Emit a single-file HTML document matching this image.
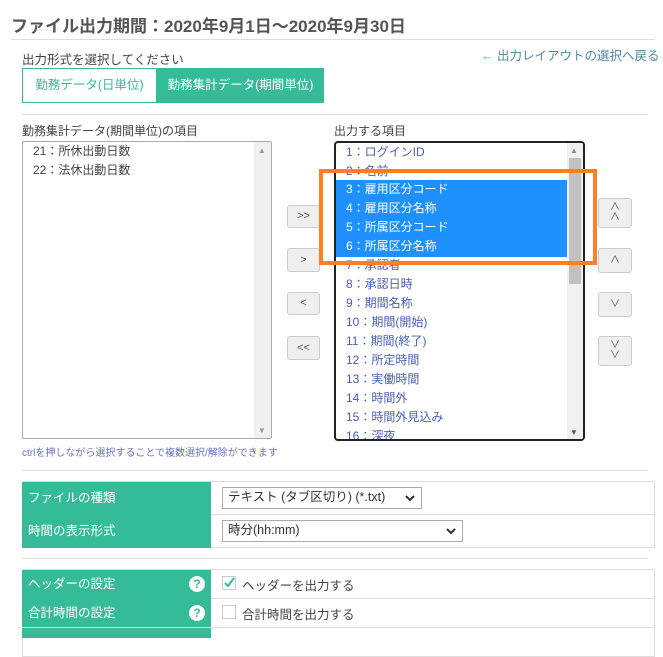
<!DOCTYPE html>
<html><head><meta charset="utf-8"><style>
*{margin:0;padding:0;box-sizing:border-box}
body{width:663px;height:633px;overflow:hidden;background:#fff;position:relative;font-family:"Liberation Sans","Noto Sans CJK JP",sans-serif;color:#444;font-size:12px}
.a{position:absolute;white-space:nowrap}
.hr{position:absolute;height:1px;background:#ddd}
.btn{position:absolute;background:#efefef;border:1px solid #ccc;border-radius:3px;font-size:11px;color:#555;text-align:center;line-height:1}
.it{position:absolute;left:10px;font-size:12px;color:#4a5fb5;height:19px;line-height:19px}
.sel{background:#1e90ff;color:#fff;left:0;width:231px;padding-left:10px}
.lab{position:absolute;left:22px;width:189px;background:#36bb99;color:#fff;font-size:12.5px;padding-left:6px}
.row{position:absolute;left:22px;width:633px;border:1px solid #ddd;background:#fff}
.q{position:absolute;left:189px;width:16px;height:16px;border-radius:50%;background:#fff;color:#36bb99;font-weight:bold;font-size:12px;text-align:center;line-height:16px}
.sl{position:absolute;border:1px solid #aaa;background:#fff;font-size:12.5px;padding-left:5px;line-height:19px;color:#333}
.sl svg{position:absolute;right:6px;top:7px}
</style></head><body>
<div class="a" style="left:11px;top:12px;font-size:17px;font-weight:bold;color:#555">ファイル出力期間：2020年9月1日～2020年9月30日</div>
<div class="hr" style="left:11px;top:39px;width:644px"></div>
<div class="a" style="left:22px;top:49px;font-size:12.5px">出力形式を選択してください</div>
<div class="a" style="left:481px;top:45px;font-size:12.5px;color:#4a8aa0"><span style="color:#36bb99;font-weight:bold">←</span> 出力レイアウトの選択へ戻る</div>
<div class="a" style="left:22px;top:68px;width:135px;height:35px;border:1px solid #36bb99;color:#36bb99;font-size:12.5px;line-height:33px;text-align:center">勤務データ(日単位)</div>
<div class="a" style="left:157px;top:68px;width:167px;height:35px;background:#36bb99;color:#fff;font-size:12.5px;line-height:35px;text-align:center">勤務集計データ(期間単位)</div>
<div class="hr" style="left:22px;top:114px;width:626px"></div>
<div class="a" style="left:22px;top:122px;font-size:12px">勤務集計データ(期間単位)の項目</div>
<div class="a" style="left:334px;top:122px;font-size:12px">出力する項目</div>

<div class="a" style="left:22px;top:141px;width:250px;height:298px;border:1px solid #aaa;border-radius:2px;overflow:hidden">
<div class="a" style="left:10px;top:0;font-size:12px;line-height:19px;color:#444">21：所休出動日数<br>22：法休出動日数</div>
<div class="a" style="right:0;top:0;width:17px;height:296px;background:#f0f0f0"><div class="a" style="left:4px;top:4px;font-size:8px;color:#999">▲</div><div class="a" style="left:4px;bottom:3px;font-size:8px;color:#999">▼</div></div>
</div>

<div class="btn" style="left:287px;top:205px;width:33px;height:23px;line-height:21px">&gt;&gt;</div>
<div class="btn" style="left:287px;top:248px;width:33px;height:24px;line-height:22px">&gt;</div>
<div class="btn" style="left:287px;top:292px;width:33px;height:23px;line-height:21px">&lt;</div>
<div class="btn" style="left:287px;top:336px;width:33px;height:24px;line-height:22px">&lt;&lt;</div>

<div class="a" style="left:334px;top:141px;width:251px;height:300px;border:2px solid #222;border-radius:4px;overflow:hidden">
<div class="it" style="top:0">1：ログインID</div>
<div class="it" style="top:19px">2：名前</div>
<div class="it sel" style="top:37px">3：雇用区分コード</div>
<div class="it sel" style="top:56px">4：雇用区分名称</div>
<div class="it sel" style="top:75px">5：所属区分コード</div>
<div class="it sel" style="top:94px;height:20px">6：所属区分名称</div>
<div class="it" style="top:113px">7：承認者</div>
<div class="it" style="top:132px">8：承認日時</div>
<div class="it" style="top:151px">9：期間名称</div>
<div class="it" style="top:170px">10：期間(開始)</div>
<div class="it" style="top:189px">11：期間(終了)</div>
<div class="it" style="top:208px">12：所定時間</div>
<div class="it" style="top:227px">13：実働時間</div>
<div class="it" style="top:246px">14：時間外</div>
<div class="it" style="top:265px">15：時間外見込み</div>
<div class="it" style="top:284px">16：深夜</div>
<div class="a" style="right:0;top:0;width:16px;height:296px;background:#f1f1f1"><div class="a" style="left:2px;top:15px;width:12px;height:126px;background:#c1c1c1"></div><div class="a" style="left:3px;top:3px;font-size:8px;color:#888">▲</div><div class="a" style="left:3px;bottom:2px;font-size:8px;color:#555">▼</div></div>
</div>
<div class="a" style="left:319px;top:169px;width:278px;height:96px;border:4px solid #ff7f27"></div>

<div class="btn" style="left:598px;top:198px;width:34px;height:30px;line-height:10px;padding-top:4px;font-size:10px">∧<br>∧</div>
<div class="btn" style="left:598px;top:248px;width:34px;height:25px;line-height:23px;font-size:10px">∧</div>
<div class="btn" style="left:598px;top:292px;width:34px;height:25px;line-height:23px;font-size:10px">∨</div>
<div class="btn" style="left:598px;top:336px;width:34px;height:30px;line-height:10px;padding-top:4px;font-size:10px">∨<br>∨</div>

<div class="a" style="left:22px;top:444px;font-size:10px;color:#6a73c0">ctrlを押しながら選択することで複数選択/解除ができます</div>
<div class="hr" style="left:22px;top:470px;width:626px"></div>

<div class="row" style="top:481px;height:34px"></div>
<div class="row" style="top:514px;height:34px"></div>
<div class="lab" style="top:482px;height:33px;line-height:33px">ファイルの種類</div>
<div class="lab" style="top:515px;height:33px;line-height:33px">時間の表示形式</div>
<div class="sl" style="left:222px;top:487px;width:200px;height:22px">テキスト (タブ区切り) (*.txt)<svg width="10" height="7"><path d="M1 1L5 5L9 1" stroke="#333" stroke-width="2" fill="none"/></svg></div>
<div class="sl" style="left:222px;top:520px;width:241px;height:22px">時分(hh:mm)<svg width="10" height="7"><path d="M1 1L5 5L9 1" stroke="#333" stroke-width="2" fill="none"/></svg></div>
<div class="hr" style="left:22px;top:558px;width:626px"></div>

<div class="row" style="top:569px;height:30px"></div>
<div class="row" style="top:598px;height:30px"></div>
<div class="row" style="top:627px;height:30px"></div>
<div class="lab" style="top:570px;height:29px;line-height:29px">ヘッダーの設定</div>
<div class="lab" style="top:599px;height:28px;line-height:28px">合計時間の設定</div>
<div class="lab" style="top:628px;height:10px"></div>
<div class="q" style="top:576px">?</div>
<div class="q" style="top:605px">?</div>
<div class="a" style="left:222px;top:576px;width:14px;height:14px;border:1px solid #ccc"><svg width="12" height="12" style="position:absolute;left:0;top:0"><path d="M2 6L5 9L11 1" stroke="#36bb99" stroke-width="2" fill="none"/></svg></div>
<div class="a" style="left:242px;top:575px;font-size:12.5px;color:#444">ヘッダーを出力する</div>
<div class="a" style="left:222px;top:605px;width:14px;height:14px;border:1px solid #ccc"></div>
<div class="a" style="left:242px;top:604px;font-size:12.5px;color:#444">合計時間を出力する</div>
</body></html>
